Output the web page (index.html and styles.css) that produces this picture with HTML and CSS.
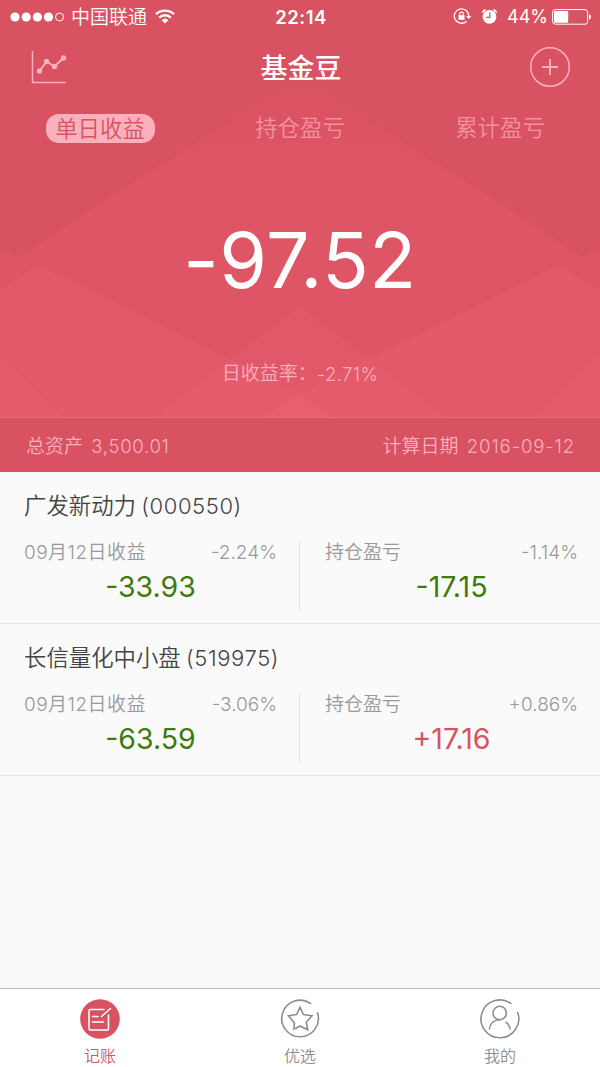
FILE: index.html
```html
<!DOCTYPE html>
<html lang="zh-CN">
<head>
<meta charset="utf-8">
<title>基金豆</title>
<link rel="stylesheet" href="styles.css">
</head>
<body>
<div class="app">
  <header class="hero">
    <svg class="hero-bg" viewBox="0 0 600 417" aria-hidden="true">
      <defs><linearGradient id="fade" x1="0" y1="0" x2="0" y2="417" gradientUnits="userSpaceOnUse"><stop offset=".2" stop-color="#e95c6e" stop-opacity="0"/><stop offset=".4" stop-color="#e95c6e" stop-opacity=".3"/><stop offset="1" stop-color="#e95c6e" stop-opacity=".34"/></linearGradient></defs>
      <path fill="url(#fade)" d="M0 250 20 257 165 162 300 80 435 162 582 257 600 250V417H0Z"/>
      <g fill="#f06a7c">
        <path fill-opacity=".22" d="M0 290 38 265 298 393 333 417H0Z"/>
        <path fill-opacity=".22" d="M600 290 559 265 300 393 264 417H600Z"/>
        <path fill-opacity=".16" d="M300 307 446 417H153Z"/>
        <path fill-opacity=".14" d="M0 355 63 417H0ZM600 350 536 417H600Z"/>
      </g>
    </svg>
    <div class="status">
      <div class="status-left">
        <svg width="54" height="12" viewBox="0 0 54 12" fill="#fff"><circle cx="5" cy="6" r="4.6"/><circle cx="16.2" cy="6" r="4.6"/><circle cx="27.4" cy="6" r="4.6"/><circle cx="38.5" cy="6" r="4.6"/><circle cx="49.5" cy="6" r="4" fill="none" stroke="#fff"/></svg>
        <span class="carrier">中国联通</span>
        <svg class="wifi" width="20" height="15" viewBox="0 0 20 15"><path d="M1 5.2a13 13 0 0 1 18 0M4.2 8.6a8.3 8.3 0 0 1 11.6 0" fill="none" stroke="#fff" stroke-width="2.4"/><path d="M6.6 11.2a5 5 0 0 1 6.8 0L10 14.6Z" fill="#fff"/></svg>
      </div>
      <span class="clock">22:14</span>
      <div class="status-right">
        <svg width="19" height="17" viewBox="0 0 19 17" fill="none" stroke="#fff"><path d="M13.500 13.200A7.200 7.200 0 1 1 15.700 8" stroke-width="1.3"/><path d="M13 8h5.400L15.700 11Z" fill="#fff" stroke="none"/><path d="M5.500 7.200h6v4.600h-6Z" fill="#fff" stroke="none"/><path d="M6.600 7.500V6a1.900 1.900 0 0 1 3.800 0v1.500" stroke-width="1.2"/></svg>
        <svg class="alarm" width="17" height="17" viewBox="0 0 17 17"><circle cx="8.5" cy="8.8" r="6.9" fill="#fff"/><path d="M1.800 3.800 3.800 2M15.200 3.800 13.200 2" stroke="#fff" stroke-width="1.8" stroke-linecap="round"/><path d="M8.800 4.500v4.800H5.200" fill="none" stroke="#d95261" stroke-width="1.3"/></svg>
        <span class="percent">44%</span>
        <svg class="battery" width="40" height="16" viewBox="0 0 40 16"><rect x=".6" y=".6" width="35" height="14.6" rx="2.5" fill="none" stroke="#fff"/><rect x="2" y="2" width="14.2" height="11.8" rx="1" fill="#fff"/><path d="M37 5.300c2.700.400 2.700 4.800 0 5.200Z" fill="#fff"/></svg>
      </div>
    </div>
    <nav class="titlebar">
      <svg class="chart" width="36" height="34" viewBox="0 0 36 34" fill="none" stroke="#fab0bd"><path d="M1.500 0v31.500H34.500" stroke-width="1.5"/><path d="M8.500 20 15.500 10.500 23.500 15.500 32.500 7" stroke-width="1.9"/><g fill="#fab0bd" stroke="none"><circle cx="8.5" cy="20" r="2.7"/><circle cx="15.5" cy="10.5" r="2.7"/><circle cx="23.5" cy="15.5" r="2.7"/><circle cx="32.5" cy="7" r="2.7"/></g></svg>
      <h1 class="title">基金豆</h1>
      <svg width="42" height="42" viewBox="0 0 42 42" fill="none" stroke="#fab0bd"><circle cx="21" cy="21" r="19.3" stroke-width="1.5"/><path d="M13 21h16M21 13v16" stroke-width="2"/></svg>
    </nav>
    <div class="segments"><span class="segment"><b class="pill">单日收益</b></span><span class="segment">持仓盈亏</span><span class="segment">累计盈亏</span></div>
    <div class="amount">-97.52</div>
    <div class="rate">日收益率：<span class="rate-num">-2.71%</span></div>
  </header>
  <section class="summary"><span>总资产 <span class="num">3,500.01</span></span><span>计算日期 <span class="num date">2016-09-12</span></span></section>
  <main class="funds">
    <article class="fund">
      <h2 class="fund-name">广发新动力 <span class="code">(000550)</span></h2>
      <div class="cols">
        <div class="col"><div class="meta"><span class="day">09月12日收益</span><span>-2.24%</span></div><div class="value">-33.93</div></div>
        <div class="col"><div class="meta"><span>持仓盈亏</span><span>-1.14%</span></div><div class="value">-17.15</div></div>
      </div>
    </article>
    <article class="fund">
      <h2 class="fund-name">长信量化中小盘 <span class="code">(519975)</span></h2>
      <div class="cols">
        <div class="col"><div class="meta"><span class="day">09月12日收益</span><span>-3.06%</span></div><div class="value">-63.59</div></div>
        <div class="col"><div class="meta"><span>持仓盈亏</span><span>+0.86%</span></div><div class="value gain">+17.16</div></div>
      </div>
    </article>
  </main>
  <nav class="tabbar">
    <div class="tab active">
      <svg width="42" height="42" viewBox="0 0 42 42" fill="none" stroke="#fff" stroke-width="1.6"><circle cx="21" cy="21" r="19.8" fill="#d95261" stroke="none"/><path d="M25 11.500H11.500a1.500 1.500 0 0 0-1.500 1.500v17.500a1.500 1.500 0 0 0 1.500 1.500H28a1.500 1.500 0 0 0 1.500-1.500V17M31.500 10.500 22.500 18.500M13.500 18.500H19M13.500 24H24.500" stroke-linecap="round"/></svg>
      <span>记账</span>
    </div>
    <div class="tab">
      <svg width="42" height="42" viewBox="0 0 42 42" fill="none" stroke="#8e8e8e" stroke-width="1.6"><path d="M32 5.800A18.300 18.300 0 1 0 38.300 14.300"/><path d="M14.700 31.800 15.500 25 9.500 17.800 17.500 16.500 21 9.300 24.500 16.500 33 17.800 27.200 24.200 28.700 31.800 21 28 16 30.800"/></svg>
      <span>优选</span>
    </div>
    <div class="tab">
      <svg width="42" height="42" viewBox="0 0 42 42" fill="none" stroke="#8e8e8e" stroke-width="1.6"><path d="M32.300 5.800A18.900 18.900 0 1 0 38.500 14"/><circle cx="20.700" cy="15" r="6.700"/><path d="M10.300 31.500C11 25.500 15 21.800 20.700 21.800M26.500 24C29.300 25.700 30.800 28.300 31.300 31.500"/></svg>
      <span>我的</span>
    </div>
  </nav>
</div>
</body>
</html>
```
FILE: styles.css
```css
* { box-sizing: border-box; }
body { margin: 0; font-family: Inter, "Noto Sans CJK SC", sans-serif; white-space: nowrap; }
svg { display: block; flex: none; }
.app { width: 600px; height: 1067px; display: flex; flex-direction: column; background: #fafafa; }
.hero { position: relative; isolation: isolate; height: 417px; background: #d95261; display: flex; flex-direction: column; }
.hero-bg { position: absolute; inset: 0; z-index: -1; width: 600px; height: 417px; }
.status { height: 33px; display: grid; grid-template-columns: 1fr auto 1fr; align-items: center; padding: 0 8px 0 10px; color: #fff; }
.status-left, .status-right { display: flex; align-items: center; }
.status-right { justify-content: flex-end; }
.carrier { margin-left: 7px; padding-top: 2px; font-size: 19px; line-height: 29px; font-weight: 350; }
.wifi { margin-left: 8px; }
.clock { font-size: 18.5px; font-weight: 600; letter-spacing: .5px; }
.alarm { margin-left: 9px; }
.percent { margin-left: 9px; font-size: 18px; }
.battery { margin-left: 4px; }
.titlebar { height: 68px; display: grid; grid-template-columns: 1fr auto 1fr; align-items: center; padding: 0 29px 0 31px; }
.titlebar > :last-child { justify-self: end; }
.chart { margin-top: 2px; }
.title { margin: 0; padding-top: 3px; color: #fff; font-size: 27px; line-height: 36px; font-weight: 500; }
.segments { height: 54px; display: grid; grid-template-columns: repeat(3, 200px); align-items: center; justify-items: center; color: #f5929f; font-size: 22.4px; line-height: 30px; font-weight: 350; }
.pill { display: block; width: 109px; height: 29px; border-radius: 13px; background: #fab0bd; color: #d95261; text-align: center; font-weight: 350; }
.amount { margin-top: 55px; text-align: center; color: #fff; font-size: 77px; line-height: 100px; letter-spacing: .5px; }
.rate { margin-top: 50px; display: flex; justify-content: center; align-items: center; color: #fab0bd; font-size: 19px; line-height: 28px; font-weight: 350; }
.rate-num { font-size: 18.5px; letter-spacing: .4px; }
.summary { height: 55px; display: flex; align-items: center; justify-content: space-between; padding: 0 26px 2px; border-top: 1px solid #e56a7a; background: #d95261; color: #fab0bd; font-size: 19px; font-weight: 350; }
.num { margin-left: 3px; font-size: 18.5px; letter-spacing: .7px; }
.date { letter-spacing: .9px; margin-right: -1px; }
.funds { flex: 1; }
.fund { height: 152px; border-bottom: 1px solid #e8e8e8; }
.fund-name { margin: 0; padding: 17px 24px 0; color: #444; font-size: 22.4px; line-height: 34px; font-weight: 350; }
.code { margin-left: -1px; font-size: 22px; letter-spacing: .6px; }
.cols { display: grid; grid-template-columns: 299px 301px; margin-top: 18px; }
.col { height: 70px; padding: 0 22px 0 24px; }
.col + .col { border-left: 1px solid #e3e3e3; padding: 0 22px 0 25px; }
.meta { display: flex; justify-content: space-between; color: #999; font-size: 19px; line-height: 24px; font-weight: 350; }
.day { letter-spacing: .45px; }
.value { color: #3f7a0c; font-size: 28.5px; line-height: 44px; text-align: center; }
.gain { color: #d95261; }
.tabbar { height: 79px; display: grid; grid-template-columns: repeat(3, 200px); border-top: 1px solid #bcbcbc; background: #fff; }
.tab { display: flex; flex-direction: column; align-items: center; padding-top: 9px; color: #8e8e8e; font-size: 16px; line-height: 32px; font-weight: 350; }
.active { color: #d95261; }
```
